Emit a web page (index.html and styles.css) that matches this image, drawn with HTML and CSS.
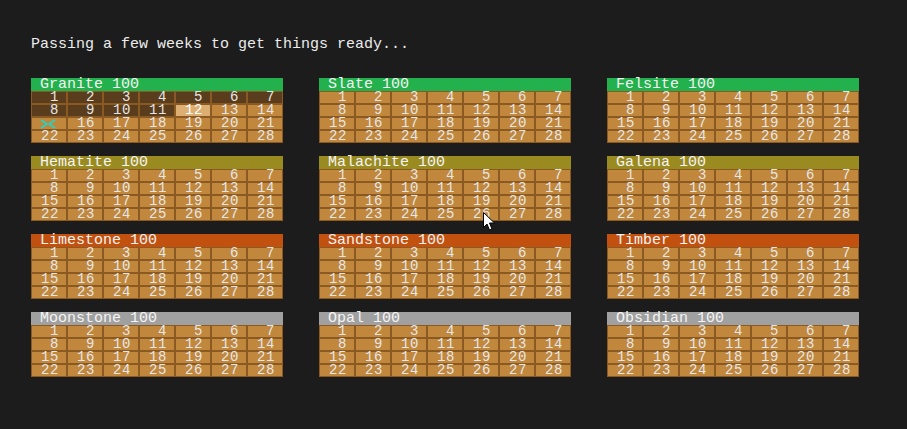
FILE: index.html
```html
<!DOCTYPE html>
<html>
<head>
<meta charset="utf-8">
<link rel="stylesheet" href="styles.css">
</head>
<body>
<div class="screen">
  <div class="title">Passing a few weeks to get things ready...</div>
  <div class="grid">
    <div class="panel">
      <div class="head green">Granite 100</div>
      <div class="days">
        <span class="dk">1</span><span class="dk">2</span><span class="dk">3</span><span class="dk">4</span><span class="dk">5</span><span class="dk">6</span><span class="dk">7</span>
        <span class="dk">8</span><span class="dk">9</span><span class="dk">10</span><span class="dk">11</span><span class="hl">12</span><span>13</span><span>14</span>
        <span class="mark"><svg width="16" height="10" viewBox="0 0 16 10"><polyline points="1,1 7,5 1,9" fill="none" stroke="#1ed6c8" stroke-width="1.6"/><polyline points="15,1 9,5 15,9" fill="none" stroke="#1ed6c8" stroke-width="1.6"/></svg></span><span>16</span><span>17</span><span>18</span><span>19</span><span>20</span><span>21</span>
        <span>22</span><span>23</span><span>24</span><span>25</span><span>26</span><span>27</span><span>28</span>
      </div>
    </div>
    <div class="panel">
      <div class="head green">Slate 100</div>
      <div class="days">
        <span>1</span><span>2</span><span>3</span><span>4</span><span>5</span><span>6</span><span>7</span>
        <span>8</span><span>9</span><span>10</span><span>11</span><span>12</span><span>13</span><span>14</span>
        <span>15</span><span>16</span><span>17</span><span>18</span><span>19</span><span>20</span><span>21</span>
        <span>22</span><span>23</span><span>24</span><span>25</span><span>26</span><span>27</span><span>28</span>
      </div>
    </div>
    <div class="panel">
      <div class="head green">Felsite 100</div>
      <div class="days">
        <span>1</span><span>2</span><span>3</span><span>4</span><span>5</span><span>6</span><span>7</span>
        <span>8</span><span>9</span><span>10</span><span>11</span><span>12</span><span>13</span><span>14</span>
        <span>15</span><span>16</span><span>17</span><span>18</span><span>19</span><span>20</span><span>21</span>
        <span>22</span><span>23</span><span>24</span><span>25</span><span>26</span><span>27</span><span>28</span>
      </div>
    </div>
    <div class="panel">
      <div class="head olive">Hematite 100</div>
      <div class="days">
        <span>1</span><span>2</span><span>3</span><span>4</span><span>5</span><span>6</span><span>7</span>
        <span>8</span><span>9</span><span>10</span><span>11</span><span>12</span><span>13</span><span>14</span>
        <span>15</span><span>16</span><span>17</span><span>18</span><span>19</span><span>20</span><span>21</span>
        <span>22</span><span>23</span><span>24</span><span>25</span><span>26</span><span>27</span><span>28</span>
      </div>
    </div>
    <div class="panel">
      <div class="head olive">Malachite 100</div>
      <div class="days">
        <span>1</span><span>2</span><span>3</span><span>4</span><span>5</span><span>6</span><span>7</span>
        <span>8</span><span>9</span><span>10</span><span>11</span><span>12</span><span>13</span><span>14</span>
        <span>15</span><span>16</span><span>17</span><span>18</span><span>19</span><span>20</span><span>21</span>
        <span>22</span><span>23</span><span>24</span><span>25</span><span>26</span><span>27</span><span>28</span>
      </div>
    </div>
    <div class="panel">
      <div class="head olive">Galena 100</div>
      <div class="days">
        <span>1</span><span>2</span><span>3</span><span>4</span><span>5</span><span>6</span><span>7</span>
        <span>8</span><span>9</span><span>10</span><span>11</span><span>12</span><span>13</span><span>14</span>
        <span>15</span><span>16</span><span>17</span><span>18</span><span>19</span><span>20</span><span>21</span>
        <span>22</span><span>23</span><span>24</span><span>25</span><span>26</span><span>27</span><span>28</span>
      </div>
    </div>
    <div class="panel">
      <div class="head rust">Limestone 100</div>
      <div class="days">
        <span>1</span><span>2</span><span>3</span><span>4</span><span>5</span><span>6</span><span>7</span>
        <span>8</span><span>9</span><span>10</span><span>11</span><span>12</span><span>13</span><span>14</span>
        <span>15</span><span>16</span><span>17</span><span>18</span><span>19</span><span>20</span><span>21</span>
        <span>22</span><span>23</span><span>24</span><span>25</span><span>26</span><span>27</span><span>28</span>
      </div>
    </div>
    <div class="panel">
      <div class="head rust">Sandstone 100</div>
      <div class="days">
        <span>1</span><span>2</span><span>3</span><span>4</span><span>5</span><span>6</span><span>7</span>
        <span>8</span><span>9</span><span>10</span><span>11</span><span>12</span><span>13</span><span>14</span>
        <span>15</span><span>16</span><span>17</span><span>18</span><span>19</span><span>20</span><span>21</span>
        <span>22</span><span>23</span><span>24</span><span>25</span><span>26</span><span>27</span><span>28</span>
      </div>
    </div>
    <div class="panel">
      <div class="head rust">Timber 100</div>
      <div class="days">
        <span>1</span><span>2</span><span>3</span><span>4</span><span>5</span><span>6</span><span>7</span>
        <span>8</span><span>9</span><span>10</span><span>11</span><span>12</span><span>13</span><span>14</span>
        <span>15</span><span>16</span><span>17</span><span>18</span><span>19</span><span>20</span><span>21</span>
        <span>22</span><span>23</span><span>24</span><span>25</span><span>26</span><span>27</span><span>28</span>
      </div>
    </div>
    <div class="panel">
      <div class="head gray">Moonstone 100</div>
      <div class="days">
        <span>1</span><span>2</span><span>3</span><span>4</span><span>5</span><span>6</span><span>7</span>
        <span>8</span><span>9</span><span>10</span><span>11</span><span>12</span><span>13</span><span>14</span>
        <span>15</span><span>16</span><span>17</span><span>18</span><span>19</span><span>20</span><span>21</span>
        <span>22</span><span>23</span><span>24</span><span>25</span><span>26</span><span>27</span><span>28</span>
      </div>
    </div>
    <div class="panel">
      <div class="head gray">Opal 100</div>
      <div class="days">
        <span>1</span><span>2</span><span>3</span><span>4</span><span>5</span><span>6</span><span>7</span>
        <span>8</span><span>9</span><span>10</span><span>11</span><span>12</span><span>13</span><span>14</span>
        <span>15</span><span>16</span><span>17</span><span>18</span><span>19</span><span>20</span><span>21</span>
        <span>22</span><span>23</span><span>24</span><span>25</span><span>26</span><span>27</span><span>28</span>
      </div>
    </div>
    <div class="panel">
      <div class="head gray">Obsidian 100</div>
      <div class="days">
        <span>1</span><span>2</span><span>3</span><span>4</span><span>5</span><span>6</span><span>7</span>
        <span>8</span><span>9</span><span>10</span><span>11</span><span>12</span><span>13</span><span>14</span>
        <span>15</span><span>16</span><span>17</span><span>18</span><span>19</span><span>20</span><span>21</span>
        <span>22</span><span>23</span><span>24</span><span>25</span><span>26</span><span>27</span><span>28</span>
      </div>
    </div>
  </div>
  <svg class="cursor" width="13" height="20" viewBox="0 0 13 20"><path d="M0.5,0.5 L0.5,15.5 L4,12 L6.5,18 L9,17 L6.5,11 L11.5,11 Z" fill="#ffffff" stroke="#000000" stroke-width="1"/></svg>
</div>
</body>
</html>
```

FILE: styles.css
```css
html, body {
  margin: 0;
  padding: 0;
  background: #1c1c1c;
}
.screen {
  position: relative;
  width: 907px;
  height: 429px;
  padding: 37px 0 0 31px;
  box-sizing: border-box;
  font-family: "Liberation Mono", "DejaVu Sans Mono", monospace;
  font-size: 15px;
  color: #ececec;
}
.title {
  height: 15px;
  line-height: 15px;
  white-space: pre;
}
.grid {
  margin-top: 26px;
  display: grid;
  grid-template-columns: repeat(3, 252px);
  column-gap: 36px;
  row-gap: 13px;
}
.panel {
  width: 252px;
}
.head {
  height: 13px;
  line-height: 13px;
  padding-left: 9px;
  color: #f4f4f4;
  white-space: pre;
  box-sizing: border-box;
}
.green { background: #22b14c; }
.olive { background: #9a8b20; }
.rust { background: #c2500e; }
.gray { background: #a0a0a0; }
.days {
  background: #8a5a22;
  padding: 1px;
  display: grid;
  grid-template-columns: repeat(7, 34px);
  grid-auto-rows: 11px;
  gap: 2px;
}
.days span {
  background: #c0873d;
  height: 11px;
  line-height: 11px;
  font-size: 14px;
  letter-spacing: 0.6px;
  text-align: right;
  padding-right: 7px;
  color: #e6e6e6;
  overflow: visible;
}
.days span.dk {
  background: #5a3d1d;
}
.days span.hl {
  background: #dcae72;
  color: #ffffff;
}
.days span.mark {
  display: flex;
  align-items: center;
  justify-content: flex-start;
  padding: 0 0 0 8px;
}
.cursor {
  position: absolute;
  left: 483px;
  top: 212px;
}
```
